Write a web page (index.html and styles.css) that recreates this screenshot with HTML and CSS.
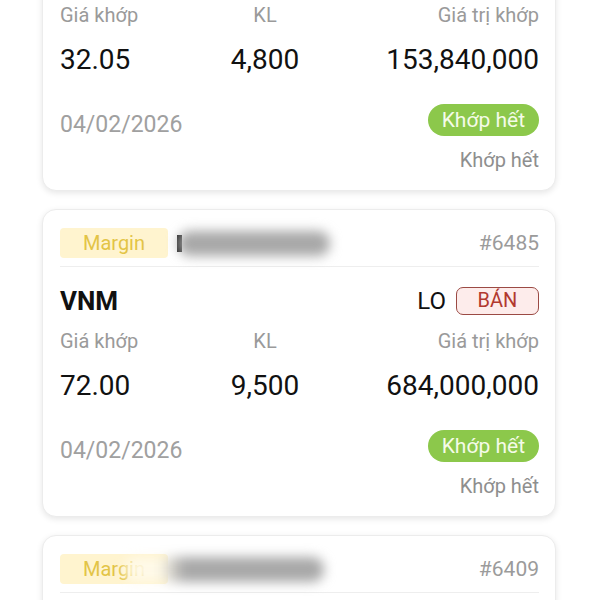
FILE: index.html
```html
<!DOCTYPE html>
<html lang="vi">
<head>
    <meta charset="UTF-8">
    <title>Lệnh khớp</title>
    <link rel="stylesheet" href="styles.css">
</head>
<body>
<div class="list">
    <div class="card">
        <div class="head">
            <span class="tag">Margin</span>
            <span class="mask"><i class="tick"></i><b class="blob"></b></span>
            <span class="no">#6502</span>
        </div>
        <div class="line"></div>
        <div class="symbol">
            <span class="code">FPT</span>
            <span class="side"><span class="type">LO</span><span class="sell">BÁN</span></span>
        </div>
        <div class="labels">
            <span>Giá khớp</span>
            <span class="mid">KL</span>
            <span class="right">Giá trị khớp</span>
        </div>
        <div class="values">
            <span>32.05</span>
            <span class="mid">4,800</span>
            <span class="right">153,840,000</span>
        </div>
        <div class="foot">
            <span class="date">04/02/2026</span>
            <div class="state">
                <span class="pill">Khớp hết</span>
                <span class="status">Khớp hết</span>
            </div>
        </div>
    </div>

    <div class="card">
        <div class="head">
            <span class="tag">Margin</span>
            <span class="mask"><i class="tick"></i><b class="blob"></b></span>
            <span class="no">#6485</span>
        </div>
        <div class="line"></div>
        <div class="symbol">
            <span class="code">VNM</span>
            <span class="side"><span class="type">LO</span><span class="sell">BÁN</span></span>
        </div>
        <div class="labels">
            <span>Giá khớp</span>
            <span class="mid">KL</span>
            <span class="right">Giá trị khớp</span>
        </div>
        <div class="values">
            <span>72.00</span>
            <span class="mid">9,500</span>
            <span class="right">684,000,000</span>
        </div>
        <div class="foot">
            <span class="date">04/02/2026</span>
            <div class="state">
                <span class="pill">Khớp hết</span>
                <span class="status">Khớp hết</span>
            </div>
        </div>
    </div>

    <div class="card">
        <div class="head">
            <span class="tag">Margin</span>
            <span class="mask mask-wide"><b class="blob"></b></span>
            <span class="no">#6409</span>
        </div>
        <div class="line"></div>
        <div class="symbol">
            <span class="code">HPG</span>
            <span class="side"><span class="type">LO</span><span class="sell">BÁN</span></span>
        </div>
    </div>
</div>
</body>
</html>
```

FILE: styles.css
```css
* {
    margin: 0;
    padding: 0;
    box-sizing: border-box;
}

body {
    background: #fff;
    font-family: Roboto, "Noto Sans", sans-serif;
    color: #111;
    overflow: hidden;
}

.list {
    margin-top: -117px;
    padding: 0 44px 0 42px;
    display: flex;
    flex-direction: column;
    gap: 18px;
}

.card {
    background: #fff;
    border-radius: 14px;
    border: 1px solid #ececec;
    box-shadow: 0 2px 6px rgba(0, 0, 0, 0.10);
    padding: 18px 16px 18px 17px;
}

.head {
    display: flex;
    align-items: center;
    height: 30px;
}

.tag {
    width: 108px;
    height: 30px;
    line-height: 30px;
    text-align: center;
    background: #fff4cf;
    color: #e3c446;
    font-size: 20px;
    border-radius: 4px;
}

.mask {
    display: flex;
    align-items: center;
    margin-left: 9px;
}

.tick {
    width: 5px;
    height: 17px;
    background: #222;
}

.blob {
    width: 152px;
    height: 25px;
    margin-left: -4px;
    background: #a8a8a8;
    border-radius: 12px;
    filter: blur(6px);
}

.mask-wide {
    margin-left: -40px;
}

.mask-wide .blob {
    width: 200px;
    background: linear-gradient(to right, rgba(255, 250, 235, 0.9) 0, rgba(255, 250, 235, 0.9) 18%, #a8a8a8 30%);
}

.no {
    margin-left: auto;
    color: #9b9b9b;
    font-size: 21px;
}

.line {
    height: 1px;
    background: #eeeeee;
    margin-top: 8px;
}

.symbol {
    display: flex;
    justify-content: space-between;
    align-items: center;
    margin-top: 20px;
    height: 28px;
}

.code {
    font-weight: 700;
    font-size: 26px;
}

.side {
    display: flex;
    align-items: center;
}

.type {
    font-size: 24px;
    color: #111;
    margin-right: 10px;
}

.sell {
    width: 83px;
    height: 28px;
    line-height: 25px;
    text-align: center;
    border: 1.5px solid #9b4a44;
    border-radius: 7px;
    background: #fdeceb;
    color: #b2392f;
    font-size: 20px;
}

.labels, .values {
    display: grid;
    grid-template-columns: 1fr 1fr 1fr;
}

.labels {
    margin-top: 14px;
    line-height: 24px;
    font-size: 20px;
    color: #9a9a9a;
}

.values {
    margin-top: 16px;
    line-height: 34px;
    font-size: 28px;
    color: #111;
}

.mid {
    text-align: center;
    padding-right: 69px;
    white-space: nowrap;
}

.right {
    text-align: right;
    white-space: nowrap;
}

.foot {
    display: flex;
    justify-content: space-between;
    align-items: flex-start;
    margin-top: 27px;
}

.date {
    margin-top: 9px;
    line-height: 24px;
    font-size: 23px;
    color: #a0a0a0;
}

.state {
    display: flex;
    flex-direction: column;
    align-items: flex-end;
}

.pill {
    height: 32px;
    line-height: 32px;
    padding: 0 14px;
    border-radius: 16px;
    background: #8cc84b;
    color: #f4fbe8;
    font-size: 21px;
}

.status {
    margin-top: 12px;
    line-height: 24px;
    font-size: 20px;
    color: #8e8e8e;
}
```
